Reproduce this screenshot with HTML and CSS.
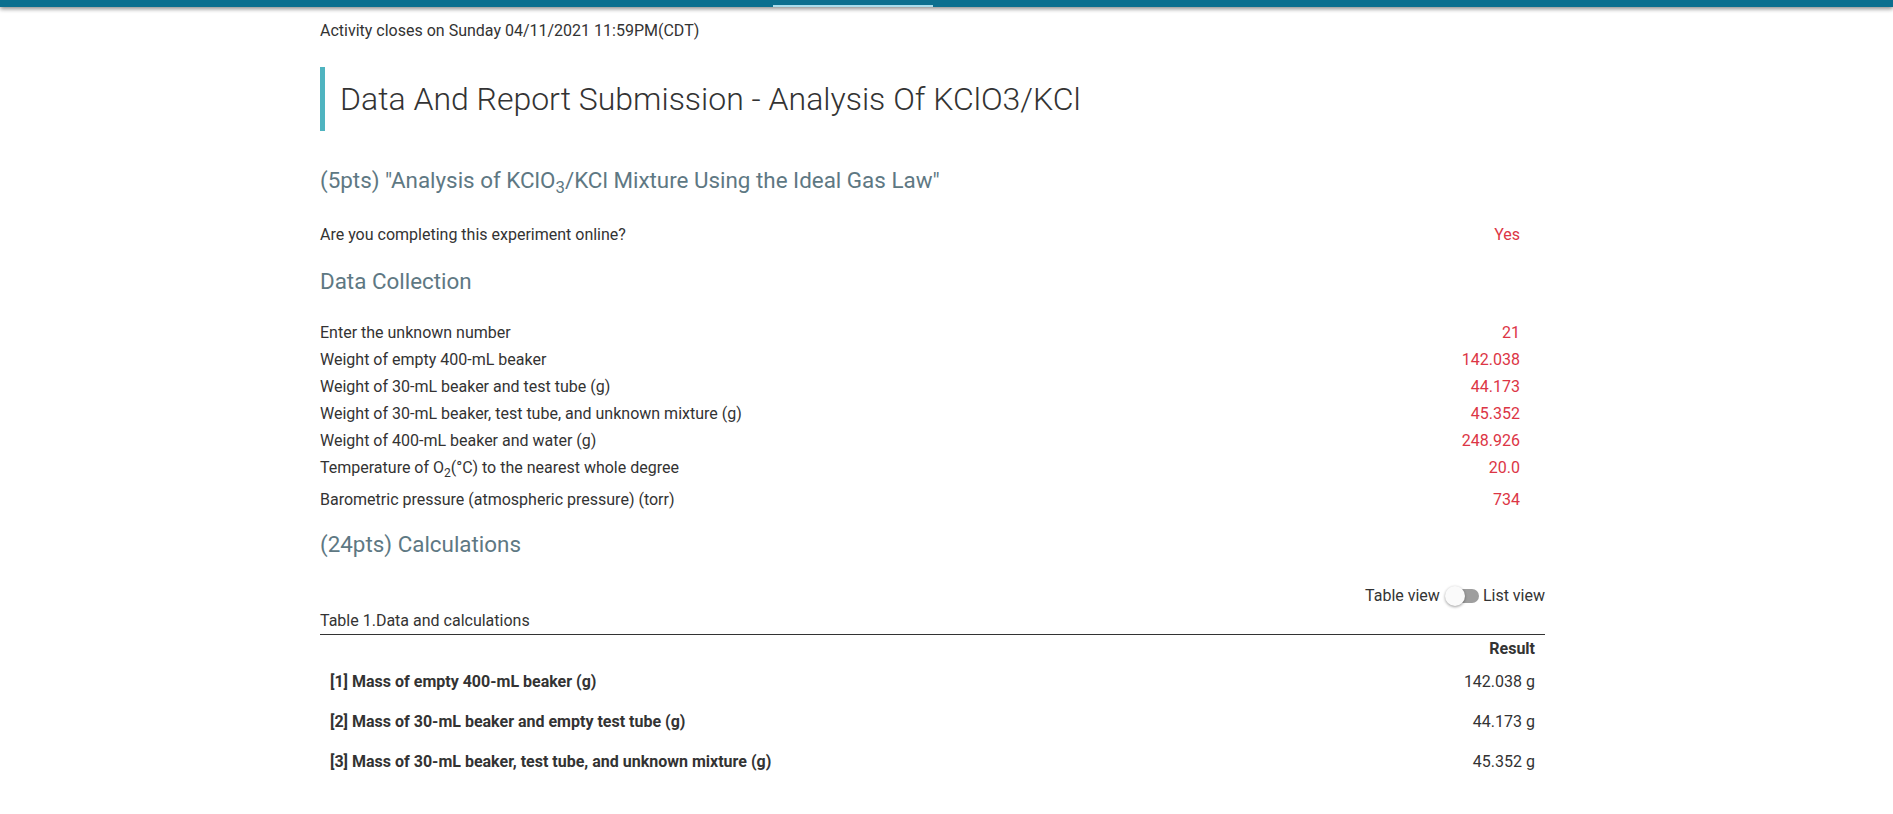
FILE: index.html
```html
<!DOCTYPE html>
<html lang="en">
<head>
<meta charset="utf-8">
<title>Data And Report Submission - Analysis Of KClO3/KCl</title>
<link rel="stylesheet" href="styles.css">
</head>
<body>
<header class="topbar">
  <div class="tab-indicator"></div>
</header>
<main class="container">
  <p class="closes">Activity closes on Sunday 04/11/2021 11:59PM(CDT)</p>
  <h1 class="page-title">Data And Report Submission - Analysis Of KClO3/KCl</h1>

  <h2 class="section-title first">(5pts) "Analysis of KClO<sub>3</sub>/KCl Mixture Using the Ideal Gas Law"</h2>
  <div class="qa-row single">
    <span class="label">Are you completing this experiment online?</span>
    <span class="value">Yes</span>
  </div>

  <h2 class="section-title dc">Data Collection</h2>
  <div class="qa-list">
    <div class="qa-row"><span class="label">Enter the unknown number</span><span class="value">21</span></div>
    <div class="qa-row"><span class="label">Weight of empty 400-mL beaker</span><span class="value">142.038</span></div>
    <div class="qa-row"><span class="label">Weight of 30-mL beaker and test tube (g)</span><span class="value">44.173</span></div>
    <div class="qa-row"><span class="label">Weight of 30-mL beaker, test tube, and unknown mixture (g)</span><span class="value">45.352</span></div>
    <div class="qa-row"><span class="label">Weight of 400-mL beaker and water (g)</span><span class="value">248.926</span></div>
    <div class="qa-row tall"><span class="label">Temperature of O<sub>2</sub>(°C) to the nearest whole degree</span><span class="value">20.0</span></div>
    <div class="qa-row"><span class="label">Barometric pressure (atmospheric pressure) (torr)</span><span class="value">734</span></div>
  </div>

  <h2 class="section-title calc">(24pts) Calculations</h2>
  <div class="view-toggle">
    <span>Table view</span>
    <span class="switch"><span class="track"></span><span class="thumb"></span></span>
    <span>List view</span>
  </div>
  <div class="table-caption">Table 1.Data and calculations</div>
  <table class="calc-table">
    <thead>
      <tr><th></th><th class="num">Result</th></tr>
    </thead>
    <tbody>
      <tr><td class="item">[1] Mass of empty 400-mL beaker (g)</td><td class="num">142.038 g</td></tr>
      <tr><td class="item">[2] Mass of 30-mL beaker and empty test tube (g)</td><td class="num">44.173 g</td></tr>
      <tr><td class="item">[3] Mass of 30-mL beaker, test tube, and unknown mixture (g)</td><td class="num">45.352 g</td></tr>
      <tr class="next"><td class="item">[4] Mass of KClO<sub>3</sub>/KCl mixture (g)</td><td class="num">1.179 g</td></tr>
    </tbody>
  </table>
</main>
</body>
</html>
```
FILE: styles.css
```css
html, body {
  margin: 0;
  padding: 0;
  background: #ffffff;
}

body {
  font-family: Roboto, "Liberation Sans", Arial, sans-serif;
  font-size: 16px;
  color: #333333;
  overflow: hidden;
}

.topbar {
  height: 7px;
  background: #0b6f8f;
  display: flex;
  align-items: flex-end;
  padding-left: 773px;
  box-shadow: 0 2px 4px rgba(0, 0, 0, 0.45);
  position: relative;
  z-index: 2;
}

.tab-indicator {
  width: 160px;
  height: 2px;
  background: #a8dcec;
}

.container {
  margin-left: 320px;
  width: 1225px;
  padding-top: 14px;
}

.closes {
  margin: 0;
  line-height: 20px;
}

.page-title {
  margin: 26px 0 0 0;
  border-left: 5px solid #4fb4c0;
  padding-left: 15px;
  height: 64px;
  line-height: 64px;
  font-size: 32px;
  font-weight: 300;
  color: #333333;
}

.section-title {
  margin: 0;
  font-size: 22.4px;
  font-weight: 400;
  line-height: 27px;
  color: #5e7883;
}

.section-title sub,
.qa-row sub,
.item sub {
  font-size: 0.75em;
  line-height: 0;
}

.section-title.first { margin-top: 36px; }
.section-title.dc { margin-top: 20px; }
.section-title.calc { margin-top: 18px; }

.qa-row {
  display: flex;
  justify-content: space-between;
  align-items: center;
  line-height: 21px;
  padding: 3px 25px 3px 0;
}

.qa-row.tall {
  padding-bottom: 8px;
}

.qa-row.single {
  margin-top: 27px;
}

.qa-list {
  margin-top: 24px;
}

.value {
  color: #dc3545;
}

.view-toggle {
  margin-top: 28px;
  display: flex;
  justify-content: flex-end;
  align-items: center;
  gap: 4px;
  line-height: 20px;
}

.switch {
  position: relative;
  width: 34px;
  height: 20px;
  margin-left: 1px;
  display: inline-block;
}

.track {
  position: absolute;
  left: 4px;
  right: 0;
  top: 3px;
  height: 14px;
  border-radius: 7px;
  background: #9e9e9e;
}

.thumb {
  position: absolute;
  left: 0;
  top: 0;
  width: 20px;
  height: 20px;
  border-radius: 50%;
  background: #fafafa;
  box-shadow: 0 1px 3px rgba(0, 0, 0, 0.4);
}

.table-caption {
  margin-top: 5px;
  line-height: 20px;
  padding-bottom: 3px;
  border-bottom: 1px solid #333333;
}

.calc-table {
  width: 100%;
  border-collapse: collapse;
}

.calc-table th {
  font-weight: 700;
  height: 27px;
  padding: 0 10px;
  line-height: 20px;
}

.calc-table td {
  height: 40px;
  padding: 0 10px;
  line-height: 20px;
}

.calc-table .item {
  font-weight: 700;
  text-align: left;
}

.calc-table .num {
  text-align: right;
}

.calc-table tr.next td {
  color: #9a9a9a;
  padding-top: 26px;
}
```
